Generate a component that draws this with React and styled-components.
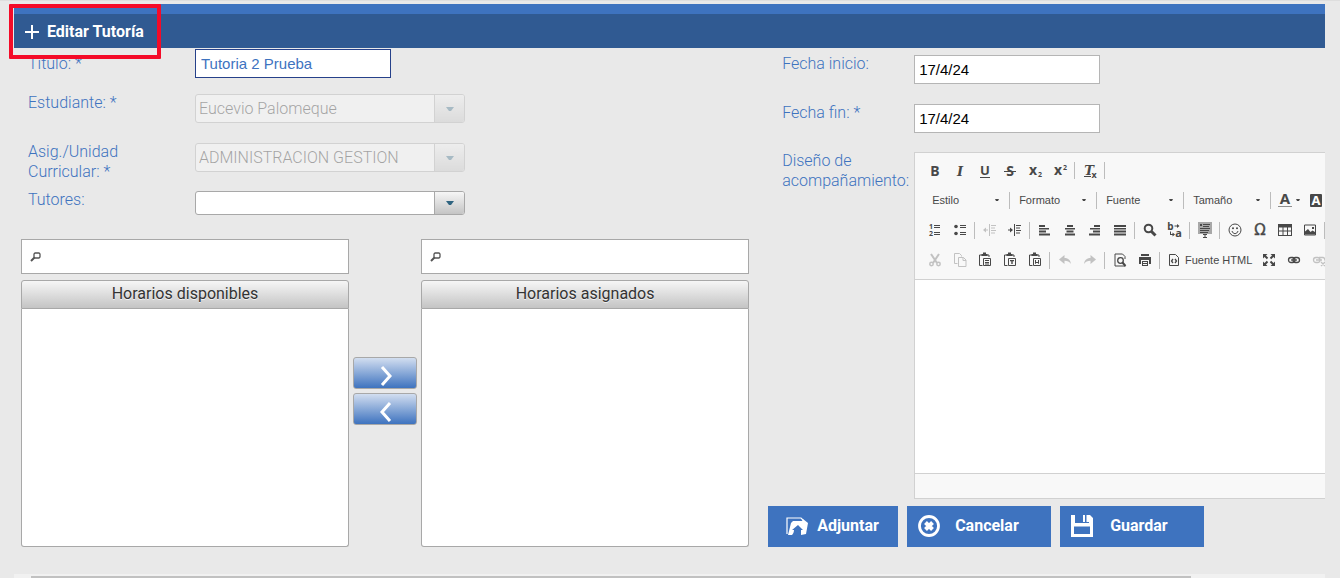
import { useState } from "react";
import styled, { createGlobalStyle } from "styled-components";

const GlobalStyle = createGlobalStyle`
  * {
    box-sizing: border-box;
  }

  body {
    margin: 0;
    background-color: #e9e9e9;
    font-family: Roboto, "Liberation Sans", sans-serif;
    font-size: 16px;
    color: #3e73bf;
  }

  button, input, select, textarea {
    font-family: inherit;
    margin: 0;
  }

  svg {
    flex: none;
    overflow: visible;
  }
`;

const Page = styled.div`
  border-top: 1px solid #dedede;
  padding: 3px 15px 0 14px;
  min-height: 100vh;
  display: flex;
  flex-direction: column;
  overflow: hidden;
`;

const TitleBar = styled.header`
  position: relative;
  display: flex;
  align-items: center;
  height: 44px;
  padding: 0 10px;
  border-top: 10px solid #3e73bf;
  background-color: #305a92;
  color: #fff;
`;

const Title = styled.h1`
  display: flex;
  align-items: center;
  gap: 7px;
  margin: 0;
  font-size: 16px;
  font-weight: 700;
`;

const Highlight = styled.div`
  position: absolute;
  top: -10px;
  left: -5px;
  width: 152px;
  height: 55px;
  border: 4px solid #f40b28;
  border-radius: 1px;
  pointer-events: none;
`;

const Columns = styled.main`
  display: grid;
  grid-template-columns: minmax(0, 4fr) minmax(0, 3fr);
`;

const LeftColumn = styled.section`
  padding: 1px 14px 0 7px;
`;

const RightColumn = styled.section`
  padding: 5px 0 0 5px;
`;

const Row = styled.div`
  display: grid;
  grid-template-columns: ${(props) => props.$labelWidth || 174}px minmax(0, 1fr);
  align-items: start;
  min-height: ${(props) => props.$height}px;
`;

const Label = styled.label`
  padding: ${(props) => props.$top || 1}px 0 0 ${(props) => props.$left || 7}px;
  font-weight: 300;
  line-height: 20px;
`;

const TextInput = styled.input`
  width: 196px;
  height: 29px;
  padding: 0 5px;
  border: 1px solid #26418a;
  border-radius: 0;
  background-color: #fff;
  font-family: "Liberation Sans", Arial, sans-serif;
  font-size: 15px;
  color: #3e73bf;
  outline: none;
`;

const DateInput = styled(TextInput)`
  width: 186px;
  margin-top: 2px;
  padding: 0 4px;
  border-color: #b5b5b5;
  color: #000;
`;

const Dropdown = styled.div`
  display: flex;
  width: 270px;
  height: ${(props) => props.$height || 29}px;
  margin-top: 2px;
  border: 1px solid #a8a8a8;
  border-radius: 3px;
  background-color: #fff;
  overflow: hidden;
  opacity: ${(props) => (props.$disabled ? 0.35 : 1)};
`;

const DropdownSelect = styled.select`
  flex: 1;
  min-width: 0;
  padding: 0 3px;
  border: none;
  appearance: none;
  background: none;
  font-size: 16px;
  font-weight: 300;
  color: #222;
  opacity: 1;
  outline: none;
`;

const DropdownArrow = styled.span`
  display: flex;
  align-items: center;
  justify-content: center;
  width: 30px;
  border-left: 1px solid #a8a8a8;
  background: linear-gradient(#f6f6f6, #c4c4c4);
`;

const PickList = styled.div`
  display: grid;
  grid-template-columns: 1fr 64px 1fr;
  gap: 4px;
`;

const PickColumn = styled.div`
  display: flex;
  flex-direction: column;
`;

const Filter = styled.label`
  display: flex;
  align-items: center;
  gap: 6px;
  height: 35px;
  margin-bottom: 6px;
  padding: 0 8px;
  border: 1px solid #a8a8a8;
  background-color: #fff;
`;

const FilterInput = styled.input`
  flex: 1;
  min-width: 0;
  border: none;
  outline: none;
  font-size: 15px;
`;

const Caption = styled.h2`
  margin: 0;
  height: 29px;
  border: 1px solid #a8a8a8;
  border-radius: 3px 3px 0 0;
  background: linear-gradient(#f6f6f6, #c4c4c4);
  font-size: 16px;
  font-weight: 400;
  line-height: 26px;
  text-align: center;
  color: #333;
  text-shadow: 0 1px 0 rgba(255, 255, 255, 0.7);
`;

const List = styled.ul`
  margin: 0;
  padding: 0;
  height: 238px;
  border: 1px solid #a8a8a8;
  border-top: none;
  border-radius: 0 0 3px 3px;
  background-color: #fff;
  list-style: none;
`;

const Transfer = styled.div`
  display: flex;
  flex-direction: column;
  justify-content: center;
  gap: 4px;
  padding-bottom: 4px;
`;

const TransferButton = styled.button`
  display: flex;
  align-items: center;
  justify-content: center;
  height: 32px;
  padding: 5px 0 0 1px;
  border: 1px solid #a8a8a8;
  border-radius: 3px;
  background: linear-gradient(#d2def0, #3e73bf);
  cursor: pointer;
`;

const Editor = styled.div`
  margin-top: 2px;
  border: 1px solid #d1d1d1;
  border-right: none;
  background-color: #fff;
  overflow: hidden;
`;

const Toolbar = styled.div`
  padding: 3px 0 4px 7px;
  border-bottom: 1px solid #d1d1d1;
  background-color: #f8f8f8;
  color: #484848;
`;

const ToolRow = styled.div`
  display: flex;
  align-items: center;
  height: ${(props) => props.$height || 30}px;
  padding-left: ${(props) => props.$indent || 0}px;
`;

const Tool = styled.button`
  display: flex;
  flex: none;
  align-items: center;
  justify-content: center;
  gap: 3px;
  width: ${(props) => props.$width || 25}px;
  height: 26px;
  padding: 0;
  border: none;
  background: none;
  font-family: "Liberation Sans", Arial, sans-serif;
  font-size: 11px;
  white-space: nowrap;
  color: #484848;
  opacity: ${(props) => (props.disabled ? 0.3 : 1)};
  cursor: pointer;
`;

const Separator = styled.span`
  flex: none;
  width: 1px;
  height: 17px;
  margin: 0 2px;
  background-color: #bcbcbc;
`;

const Combo = styled.span`
  display: flex;
  flex: none;
  align-items: center;
  width: 82px;
  padding: 0 8px 0 7px;
`;

const ComboSelect = styled.select`
  flex: 1;
  min-width: 0;
  padding: 0;
  border: none;
  appearance: none;
  background: none;
  font-family: "Liberation Sans", Arial, sans-serif;
  font-size: 11px;
  color: #484848;
  outline: none;
`;

const EditorBody = styled.textarea`
  display: block;
  width: 100%;
  height: 193px;
  padding: 20px;
  border: none;
  resize: none;
  outline: none;
`;

const EditorFooter = styled.div`
  height: 25px;
  border-top: 1px solid #d1d1d1;
  background-color: #f8f8f8;
`;

const Actions = styled.div`
  display: flex;
  gap: 9px;
  margin-top: 7px;
`;

const ActionButton = styled.button`
  display: flex;
  align-items: center;
  gap: ${(props) => props.$gap}px;
  width: ${(props) => props.$width}px;
  height: 41px;
  padding: 0 0 2px ${(props) => props.$left}px;
  border: none;
  background-color: #3e73bf;
  color: #fff;
  font-size: 16px;
  font-weight: 700;
  cursor: pointer;
`;

const ScrollTrack = styled.div`
  height: 4px;
  margin-top: auto;
  padding: 2px 134px 0 17px;
  background-color: #f1f1f1;
`;

const ScrollThumb = styled.div`
  height: 2px;
  background-color: #c1c1c1;
`;

const Glyph = styled.text`
  font-family: ${(props) => props.$family || '"Noto Sans"'}, sans-serif;
  font-size: ${(props) => props.$size || 14}px;
  font-weight: ${(props) => props.$weight || 700};
  font-style: ${(props) => (props.$italic ? "italic" : "normal")};
  text-anchor: middle;
`;

const clipboard = (
  <>
    <path d="M5.500 13.500H2.500V3H12v2" fill="none" stroke="currentColor" />
    <path d="M4.500 2H6V.5h3V2h1.500v2h-6z" />
    <path d="M6.500 6.500h7v7h-7z" fill="none" stroke="currentColor" />
  </>
);

const icons = {
  bold: <Glyph x="8" y="13">B</Glyph>,
  italic: <Glyph x="8" y="13" $family='"DejaVu Serif"' $size="13" $italic>I</Glyph>,
  underline: (
    <>
      <Glyph x="8" y="12" $size="13">U</Glyph>
      <path d="M3 14h10v1H3z" />
    </>
  ),
  strike: (
    <>
      <Glyph x="8" y="13">S</Glyph>
      <path d="M2 8h12v1H2z" />
    </>
  ),
  subscript: (
    <>
      <Glyph x="6" y="12" $size="14">x</Glyph>
      <Glyph x="13" y="14" $size="7">2</Glyph>
    </>
  ),
  superscript: (
    <>
      <Glyph x="6" y="12" $size="14">x</Glyph>
      <Glyph x="13" y="7" $size="7">2</Glyph>
    </>
  ),
  removeFormat: (
    <>
      <Glyph x="7" y="12" $family='"DejaVu Serif"' $size="13" $italic>T</Glyph>
      <path d="M2 13h7v1H2z" />
      <Glyph x="12" y="15" $size="9">x</Glyph>
    </>
  ),
  numbered: (
    <>
      <Glyph x="4" y="7" $size="7">1</Glyph>
      <Glyph x="4" y="14" $size="7">2</Glyph>
      <path d="M7 3h6v1H7zM7 5h6v1H7zM7 10h6v1H7zM7 12h6v1H7z" />
    </>
  ),
  bulleted: (
    <>
      <circle cx="4" cy="4.500" r="1.800" />
      <circle cx="4" cy="11.500" r="1.800" />
      <path d="M8 3h6v1H8zM8 5h6v1H8zM8 10h6v1H8zM8 12h6v1H8z" />
    </>
  ),
  outdent: <path d="M7 2h1v12H7zM9 3h5v1H9zM9 5.500h4v1H9zM9 8h5v1H9zM9 10.500h4v1H9zM6 7.500H4V5.500L1 8l3 2.500v-2h2z" />,
  indent: <path d="M7 2h1v12H7zM9 3h5v1H9zM9 5.500h4v1H9zM9 8h5v1H9zM9 10.500h4v1H9zM1 7.500h2V5.500L6 8l-3 2.500v-2H1z" />,
  left: <path d="M2 3h6v2H2zM2 6h10v1.500H2zM2 8.500h7v2H2zM2 11.500h11v2H2z" />,
  center: <path d="M5 3h6v2H5zM3 6h10v1.500H3zM4.500 8.500h7v2h-7zM3 11.500h10v2H3z" />,
  right: <path d="M7 3h6v2H7zM3 6h10v1.500H3zM6 8.500h7v2H6zM2 11.500h11v2H2z" />,
  justify: <path d="M2 3h12v2H2zM2 6h12v1.500H2zM2 8.500h12v2H2zM2 11.500h12v2H2z" />,
  find: (
    <g fill="none" stroke="currentColor">
      <circle cx="6.500" cy="6.500" r="3.800" strokeWidth="2" />
      <path d="M9.500 9.500l4 4" strokeWidth="3" />
    </g>
  ),
  replace: (
    <>
      <Glyph x="3.500" y="8" $size="10">b</Glyph>
      <Glyph x="11.500" y="15" $size="11">a</Glyph>
      <path d="M7.500 3.500h2.500V2l2.500 2-2.500 2V4.500H7.500zM3 9.500h1V12h1.500v-1.500L8 12.500l-2.500 2V13H3z" />
    </>
  ),
  selectAll: (
    <>
      <path d="M1 0h14v12H1z" opacity=".45" />
      <path d="M3 2h2v2H3zM6 2h7v1H6zM6 4h6v1H6zM3 6h10v1H3zM3 8h9v1H3zM3 10h8v1H3zM6 12h4v1H8.500v2H10v1H6v-1h1.500v-2H6z" />
    </>
  ),
  smiley: (
    <>
      <circle cx="8" cy="8" r="6" fill="none" stroke="currentColor" />
      <circle cx="6" cy="6.300" r="1" />
      <circle cx="10" cy="6.300" r="1" />
      <path d="M5 9c1 3.500 5 3.500 6 0" fill="none" stroke="currentColor" />
    </>
  ),
  special: <Glyph x="8" y="13" $family='"DejaVu Sans"' $size="15" $weight="400" stroke="currentColor" strokeWidth=".4">Ω</Glyph>,
  table: <path d="M1 2h14v12H1zM2 5.500v3h3.500v-3zM6.500 5.500v3h3.500v-3zM11 5.500v3h3v-3zM2 9.500V13h3.500V9.500zM6.500 9.500V13h3.500V9.500zM11 9.500V13h3V9.500z" fillRule="evenodd" />,
  image: (
    <>
      <path d="M2.500 3h11v10h-11z" fill="none" stroke="currentColor" />
      <path d="M3 12V9.500L6 7l2.500 3 2-1.500L13 10v2.500H3zM10 5h2v2h-2z" />
    </>
  ),
  cut: (
    <g fill="none" stroke="currentColor" strokeWidth="2">
      <path d="M4 2l6 9M12 2l-6 9" />
      <circle cx="4.500" cy="12" r="1.700" strokeWidth="1.500" />
      <circle cx="11.500" cy="12" r="1.700" strokeWidth="1.500" />
    </g>
  ),
  copy: (
    <g fill="none" stroke="currentColor">
      <path d="M5.500 11.500h-3v-10h5l2 2v1" />
      <path d="M6.500 5.500h5l2.500 2.500v6.500H6.500z" />
      <path d="M11 5.500v3h3" />
    </g>
  ),
  paste: (
    <>
      {clipboard}
      <path d="M8 8h4v1H8zM8 10h4v1H8zM8 11.500h4v1H8z" />
    </>
  ),
  pasteText: (
    <>
      {clipboard}
      <path d="M8 8h4v1.300h-1.300V12H9.300V9.300H8z" />
    </>
  ),
  pasteWord: (
    <>
      {clipboard}
      <path d="M8.500 8v3.500l1.500-1.500 1.500 1.500V8" fill="none" stroke="currentColor" />
    </>
  ),
  undo: <path d="M2 7.500L7.500 3v3c4 0 6 2.500 6.500 6-1.500-2.500-3.500-3.200-6.500-3.200V12z" />,
  redo: <path d="M14 7.500L8.500 3v3c-4 0-6 2.500-6.500 6 1.500-2.500 3.500-3.200 6.500-3.200V12z" />,
  preview: (
    <g fill="none" stroke="currentColor">
      <path d="M13.500 14H3V2h7.500l2.500 2.500V7" />
      <circle cx="8.500" cy="8.500" r="2.800" strokeWidth="1.300" />
      <path d="M10.500 10.500l3 3.500" strokeWidth="2" />
    </g>
  ),
  print: <path d="M4 2h8v2H4zM2 5h12v7h-2V8H4v4H2zM5 9h6v5H5zM6 10v1h4v-1zM6 12v1h4v-1z" fillRule="evenodd" />,
  source: (
    <g fill="none" stroke="currentColor">
      <path d="M3.500 2.500h6l3 3v8h-9z" />
      <path d="M7 7L5.500 9 7 11M9 7l1.500 2L9 11" strokeWidth="1.300" />
    </g>
  ),
  maximize: (
    <>
      <path d="M2 2h4.500L2 6.500zM14 2H9.500L14 6.500zM2 14h4.500L2 9.500zM14 14H9.500L14 9.500z" />
      <path d="M3 3l3.500 3.500M13 3L9.500 6.500M3 13l3.500-3.500M13 13L9.500 9.500" stroke="currentColor" strokeWidth="2" />
    </>
  ),
  link: (
    <g fill="none" stroke="currentColor" strokeWidth="1.300">
      <rect x="2.500" y="5.500" width="6.500" height="5" rx="2.500" />
      <rect x="7" y="5.500" width="6.500" height="5" rx="2.500" />
      <path d="M5 8h6" />
    </g>
  ),
  unlink: (
    <g fill="none" stroke="currentColor" strokeWidth="1.300">
      <rect x="2.500" y="5.500" width="6.500" height="5" rx="2.500" />
      <path d="M8 5.500h3.500a2 2 0 012 3M5 8h6M10 10l4 4M14 10l-4 4" />
    </g>
  ),
};

const Icon = ({ name }) => (
  <svg width="16" height="16" viewBox="0 0 16 16" fill="currentColor" aria-hidden="true">
    {icons[name]}
  </svg>
);

const Caret = () => (
  <svg width="4" height="2" viewBox="0 0 4 2" fill="#484848" aria-hidden="true">
    <path d="M0 0h4L3 2H1z" />
  </svg>
);

const topTools = [
  ["bold", "Negrita"], ["italic", "Cursiva"], ["underline", "Subrayado"],
  ["strike", "Tachado"], ["subscript", "Subíndice"], ["superscript", "Superíndice"],
  null, ["removeFormat", "Eliminar formato"], null,
];

const middleTools = [
  ["numbered", "Lista numerada"], ["bulleted", "Lista con viñetas"], null,
  ["outdent", "Disminuir sangría", true], ["indent", "Aumentar sangría"], null,
  ["left", "Alinear a la izquierda"], ["center", "Centrar"],
  ["right", "Alinear a la derecha"], ["justify", "Justificar"], null,
  ["find", "Buscar"], ["replace", "Reemplazar"], null,
  ["selectAll", "Seleccionar todo"], null,
  ["smiley", "Emoticono"], ["special", "Carácter especial"],
  ["table", "Tabla"], ["image", "Imagen"], null,
];

const clipboardTools = [
  ["cut", "Cortar", true], ["copy", "Copiar", true], ["paste", "Pegar"],
  ["pasteText", "Pegar como texto"], ["pasteWord", "Pegar desde Word"], null,
  ["undo", "Deshacer", true], ["redo", "Rehacer", true], null,
  ["preview", "Vista previa"], ["print", "Imprimir"], null,
];

const linkTools = [
  ["maximize", "Maximizar"], ["link", "Vínculo"], ["unlink", "Quitar vínculo", true],
];

const Tools = ({ items }) =>
  items.map((item, index) =>
    item ? (
      <Tool key={index} type="button" aria-label={item[1]} disabled={item[2]}>
        <Icon name={item[0]} />
      </Tool>
    ) : (
      <Separator key={index} />
    )
  );

function Select({ id, value, disabled, height }) {
  return (
    <Dropdown $disabled={disabled} $height={height}>
      <DropdownSelect id={id} disabled={disabled}>
        <option>{value}</option>
      </DropdownSelect>
      <DropdownArrow>
        <svg width="8" height="4" viewBox="0 0 8 4" fill="#2f6480" aria-hidden="true">
          <path d="M0 0h8L5 4H3z" />
        </svg>
      </DropdownArrow>
    </Dropdown>
  );
}

function PickPanel({ title }) {
  return (
    <PickColumn>
      <Filter>
        <svg width="12" height="12" viewBox="0 0 12 12" fill="none" stroke="#555" aria-hidden="true">
          <path d="M5 2h4l1 1v3L9 7H5L4 6V3z" strokeWidth="1.300" />
          <path d="M4.500 6.500L1 10" strokeWidth="2" />
        </svg>
        <FilterInput type="text" aria-label={`Filtrar ${title}`} />
      </Filter>
      <Caption>{title}</Caption>
      <List aria-label={title} />
    </PickColumn>
  );
}

function RichEditor() {
  return (
    <Editor>
      <Toolbar>
        <ToolRow $height={29}>
          <Tools items={topTools} />
        </ToolRow>
        <ToolRow $indent={3}>
          {["Estilo", "Formato", "Fuente", "Tamaño"].map((name) => [
            <Combo key={name}>
              <ComboSelect aria-label={name}>
                <option>{name}</option>
              </ComboSelect>
              <Caret />
            </Combo>,
            <Separator key={name + "-sep"} />,
          ])}
          <Tool type="button" $width={31} aria-label="Color de texto">
            <svg width="16" height="16" viewBox="0 0 16 16" fill="currentColor" aria-hidden="true">
              <Glyph x="8" y="12" $size="15">A</Glyph>
              <path d="M1 14h14v1H1z" opacity=".6" />
            </svg>
            <Caret />
          </Tool>
          <Tool type="button" $width={31} aria-label="Color de fondo">
            <svg width="16" height="16" viewBox="0 0 16 16" fill="currentColor" aria-hidden="true">
              <rect x="2" y="2" width="12" height="13" rx="1" />
              <Glyph x="8" y="13" $size="13" fill="#fff">A</Glyph>
            </svg>
            <Caret />
          </Tool>
        </ToolRow>
        <ToolRow>
          <Tools items={middleTools} />
        </ToolRow>
        <ToolRow>
          <Tools items={clipboardTools} />
          <Tool type="button" $width={94}>
            <Icon name="source" />
            Fuente HTML
          </Tool>
          <Tools items={linkTools} />
        </ToolRow>
      </Toolbar>
      <EditorBody id="diseno" />
      <EditorFooter />
    </Editor>
  );
}

function App() {
  const [titulo, setTitulo] = useState("Tutoria 2 Prueba");
  const [inicio, setInicio] = useState("17/4/24");
  const [fin, setFin] = useState("17/4/24");

  return (
    <>
      <GlobalStyle />
      <Page>
        <TitleBar>
          <Title>
            <svg width="16" height="16" viewBox="0 0 16 16" stroke="#fff" strokeWidth="2" aria-hidden="true">
              <path d="M8 2v14M1 9h14" />
            </svg>
            Editar Tutoría
          </Title>
          <Highlight />
        </TitleBar>

        <Columns>
          <LeftColumn>
            <Row $height={43}>
              <Label htmlFor="titulo" $top={5}>Titulo: *</Label>
              <TextInput id="titulo" value={titulo} onChange={(event) => setTitulo(event.target.value)} />
            </Row>
            <Row $height={49}>
              <Label htmlFor="estudiante">Estudiante: *</Label>
              <Select id="estudiante" value="Eucevio Palomeque" disabled />
            </Row>
            <Row $height={48}>
              <Label htmlFor="asignatura">Asig./Unidad<br />Curricular: *</Label>
              <Select id="asignatura" value="ADMINISTRACION GESTION" disabled />
            </Row>
            <Row $height={50}>
              <Label htmlFor="tutores">Tutores:</Label>
              <Select id="tutores" value="" height={24} />
            </Row>

            <PickList>
              <PickPanel title="Horarios disponibles" />
              <Transfer>
                <TransferButton type="button" aria-label="Asignar">
                  <svg width="14" height="20" viewBox="0 0 14 20" fill="none" stroke="#fff" strokeWidth="3" aria-hidden="true">
                    <path d="M3 1l8 9-8 9" />
                  </svg>
                </TransferButton>
                <TransferButton type="button" aria-label="Quitar">
                  <svg width="14" height="20" viewBox="0 0 14 20" fill="none" stroke="#fff" strokeWidth="3" aria-hidden="true">
                    <path d="M11 1l-8 9 8 9" />
                  </svg>
                </TransferButton>
              </Transfer>
              <PickPanel title="Horarios asignados" />
            </PickList>
          </LeftColumn>

          <RightColumn>
            <Row $height={49} $labelWidth={146}>
              <Label htmlFor="inicio" $left={14}>Fecha inicio:</Label>
              <DateInput id="inicio" value={inicio} onChange={(event) => setInicio(event.target.value)} />
            </Row>
            <Row $height={48} $labelWidth={146}>
              <Label htmlFor="fin" $left={14}>Fecha fin: *</Label>
              <DateInput id="fin" value={fin} onChange={(event) => setFin(event.target.value)} />
            </Row>
            <Row $labelWidth={146}>
              <Label htmlFor="diseno" $left={14}>Diseño de acompañamiento:</Label>
              <RichEditor />
            </Row>
            <Actions>
              <ActionButton type="button" $width={130} $left={18} $gap={9}>
                <svg width="22" height="18" viewBox="0 0 22 18" aria-hidden="true">
                  <path d="M1 17V1h14l2 2" fill="none" stroke="#fff" strokeWidth="1.200" />
                  <path d="M2 18L5 6l2-2h9l1-2 5 4-2 11-5 1v-5h2l-5-5-6 5h2c0 2-1 4-2 5z" fill="#fff" />
                </svg>
                Adjuntar
              </ActionButton>
              <ActionButton type="button" $width={144} $left={11} $gap={15}>
                <svg width="22" height="24" viewBox="0 0 22 24" fill="none" stroke="#fff" aria-hidden="true">
                  <circle cx="11" cy="12" r="9.500" strokeWidth="2.800" />
                  <path d="M7.500 8.500l7 7M14.500 8.500l-7 7" strokeWidth="4" />
                </svg>
                Cancelar
              </ActionButton>
              <ActionButton type="button" $width={144} $left={11} $gap={17}>
                <svg width="22" height="24" viewBox="0 0 22 24" aria-hidden="true">
                  <path d="M0 1h4v8h14V1h1l3 3v19H0zM3 12.500V20h16v-7.500z" fill="#fff" fillRule="evenodd" />
                  <path d="M12 1h2v7h-2zM15.500 1H18v7h-2.500z" fill="#fff" />
                </svg>
                Guardar
              </ActionButton>
            </Actions>
          </RightColumn>
        </Columns>

        <ScrollTrack>
          <ScrollThumb />
        </ScrollTrack>
      </Page>
    </>
  );
}

export default App;
